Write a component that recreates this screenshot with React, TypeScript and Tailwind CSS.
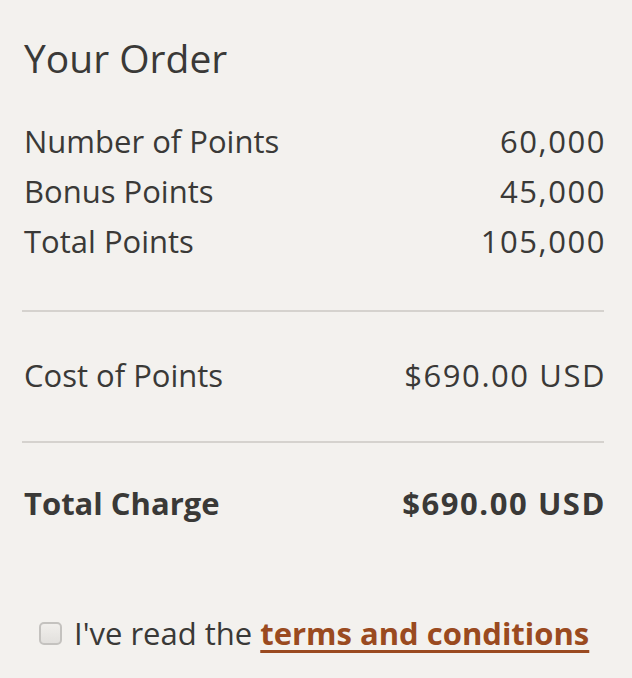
import React from "react";

const font = { fontFamily: '"Open Sans", "Liberation Sans", sans-serif' };

function Row({ label, value, bold = false }: { label: string; value: string; bold?: boolean }) {
  return (
    <div className={`flex items-baseline justify-between ${bold ? "font-bold" : ""}`}>
      <span>{label}</span>
      <span className="tracking-[0.05em] -mr-[2px]">{value}</span>
    </div>
  );
}

export default function App() {
  return (
    <div
      className="w-[632px] h-[678px] bg-[#f3f1ee] text-[#3a3937] pl-6 pr-7 pt-[32px] overflow-hidden"
      style={font}
    >
      <h1 className="text-[39px] leading-[52px] font-normal">Your Order</h1>
      <div className="mt-[32px] text-[31px] leading-[50px]">
        <Row label="Number of Points" value="60,000" />
        <Row label="Bonus Points" value="45,000" />
        <Row label="Total Points" value="105,000" />
      </div>
      <div className="mt-[44px] h-[2px] bg-[#d5d2ce] -ml-[2px]" />
      <div className="mt-[38px] text-[31px] leading-[50px]">
        <Row label="Cost of Points" value="$690.00 USD" />
      </div>
      <div className="mt-[41px] h-[2px] bg-[#d5d2ce] -ml-[2px]" />
      <div className="mt-[35px] text-[31px] leading-[50px]">
        <Row label="Total Charge" value="$690.00 USD" bold />
      </div>
      <div className="mt-[85px] flex items-center gap-[12px] pl-[15px] text-[31px] leading-[40px]">
        <span className="w-[23px] h-[23px] rounded-[5px] border-2 border-[#c4c2bf] bg-gradient-to-b from-[#f1efec] to-[#e2e0dd] shrink-0" />
        <span>
          I've read the{" "}
          <a href="#" className="font-bold text-[#9a4a20] underline decoration-[3px] underline-offset-[5px]">
            terms and conditions
          </a>
        </span>
      </div>
    </div>
  );
}
